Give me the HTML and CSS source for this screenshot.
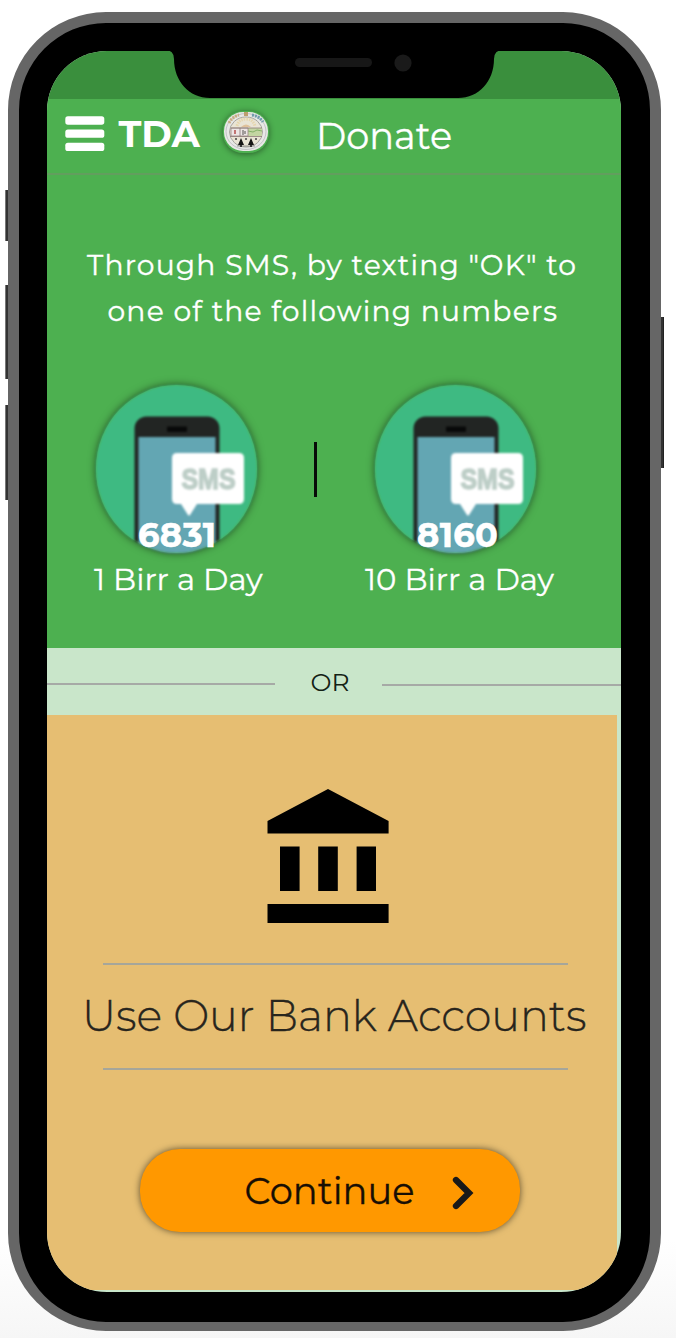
FILE: index.html
```html
<!DOCTYPE html>
<html lang="en">
<head>
<meta charset="utf-8">
<title>TDA Donate</title>
<link rel="stylesheet" href="styles.css">
</head>
<body>
<div class="stage">
<div class="phone">
  <span class="side-button silent"></span>
  <span class="side-button volume-up"></span>
  <span class="side-button volume-down"></span>
  <span class="side-button power"></span>
  <svg class="notch" width="338" height="50" viewBox="0 0 338 50">
    <path d="M0 -2V0Q9 0 9 9C9 31 24 48 45 48H293C314 48 329 31 329 9Q329 0 338 0V-2Z" fill="#000"/>
    <rect x="130" y="8" width="77" height="9" rx="4.5" fill="#171717"/>
    <circle cx="238" cy="13" r="8.6" fill="#1a1a1a"/>
  </svg>
  <div class="screen">
    <div class="status"></div>
    <header class="appbar">
      <svg class="menu" width="40" height="36" viewBox="0 0 40 36" fill="#fff">
        <rect x=".3" y=".3" width="39" height="8.4" rx="2.6"/>
        <rect x=".3" y="13.4" width="39" height="8.4" rx="2.6"/>
        <rect x=".3" y="26.7" width="39" height="8.4" rx="2.6"/>
      </svg>
      <span class="brand">TDA</span>
      <svg class="seal" width="46" height="42" viewBox="0 0 46 42">
        <rect x="1" y="1" width="44" height="39" rx="19" fill="#e8e8e6"/>
        <ellipse cx="23" cy="20.500" rx="20" ry="18" fill="none" stroke="#b9b8be" stroke-width=".8"/>
        <ellipse cx="23" cy="21" rx="16.500" ry="15" fill="#e9e4d5" stroke="#a5a49e" stroke-width="1"/>
        <path d="M6 12Q9 6 16 4" fill="none" stroke="#c9ac81" stroke-width="3" stroke-dasharray="2 1"/>
        <path d="M29 4Q36 5 40 11" fill="none" stroke="#6f9bac" stroke-width="3" stroke-dasharray="2 1"/>
        <path d="M21 1h4v4h-4z" fill="#bd9e6d"/>
        <path d="M14 15Q16 8 23 8T32 15" fill="none" stroke="#e6d6ae" stroke-width="3" stroke-dasharray="1.500 1"/>
        <path d="M18 16Q23 11 28 16" fill="#dfc09a"/>
        <path d="M25 17h14v8H25z" fill="#c3d5a2"/>
        <path d="M25 20l5 1 4-2 5 1" fill="none" stroke="#84b068"/>
        <path d="M8 17h17v8H8z" fill="#ece5e5" stroke="#9a8584" stroke-width=".8"/>
        <path d="M17 17v8M8 17h31M7 25.500h32" stroke="#8c7976" stroke-width=".8"/>
        <path d="M12 19v4" stroke="#b54d4d" stroke-width="1.500"/>
        <path d="M20 19v5M22 20v3" stroke="#565250"/>
        <circle cx="13" cy="28" r="1" fill="#444"/><circle cx="23" cy="28" r="1" fill="#444"/><circle cx="33" cy="28" r="1" fill="#444"/>
        <path d="M18 27l3 7h-2v2h-2v-2h-2zM28 27l3 7h-2v2h-2v-2h-2z" fill="#171717"/>
        <path d="M14 35h18" stroke="#777" stroke-width=".7"/>
      </svg>
      <h1 class="title">Donate</h1>
    </header>
    <section class="sms">
      <p class="lead"><span class="first-line">Through SMS, by texting "OK" to</span><span class="second-line">one of the following numbers</span></p>
      <div class="plans">
        <div class="plan">
          <div class="badge">
            <svg class="art" width="161" height="168" viewBox="0 0 161 168">
              <defs><clipPath id="disc"><ellipse cx="80.500" cy="84" rx="80.500" ry="84"/></clipPath></defs>
              <g id="sms-art">
                <g clip-path="url(#disc)">
                  <rect width="161" height="168" fill="#3eba82"/>
                  <rect x="38.500" y="31.500" width="85" height="150" rx="12" fill="#222523"/>
                  <rect x="42.500" y="52" width="77" height="120" fill="#63a6b3"/>
                  <rect x="71" y="41.500" width="20" height="5.500" rx="1" fill="#080909"/>
                </g>
                <path d="M81 68h62q5 0 5 5v41q0 5-5 5H101L94 130Q93 131 92 130L85 119h-4q-5 0-5-5V73q0-5 5-5z" fill="#fff"/>
                <text x="85.500" y="103.500" font-family="Liberation Sans, sans-serif" font-weight="700" font-size="30" textLength="54" lengthAdjust="spacingAndGlyphs" fill="#bdcec7" stroke="#bdcec7" stroke-width="1.500">SMS</text>
              </g>
            </svg>
            <span class="number">6831</span>
          </div>
          <span class="rate">1 Birr a Day</span>
        </div>
        <div class="divider"></div>
        <div class="plan second">
          <div class="badge">
            <svg class="art" width="161" height="168" viewBox="0 0 161 168"><use href="#sms-art"/></svg>
            <span class="number">8160</span>
          </div>
          <span class="rate">10 Birr a Day</span>
        </div>
      </div>
    </section>
    <div class="or"><span class="rule left"></span><span class="or-label">OR</span><span class="rule right"></span></div>
    <section class="bank">
      <svg class="bank-icon" width="122" height="134" viewBox="0 0 122 134">
        <path d="M61 0L121.600 32V44.500H.5V32ZM13 57.500H32.600V102H13ZM51.200 57.500H70.800V102H51.200ZM89.600 57.500H109V102H89.600ZM.5 115H121.600V134H.5Z" fill="#000"/>
      </svg>
      <h2 class="bank-title"><span>Use Our Bank Accounts</span></h2>
      <button class="continue">Continue
        <svg class="chevron" width="22" height="34" viewBox="0 0 22 34"><path d="M4 4L17 17L4 30" fill="none" stroke="#191919" stroke-width="6.300" stroke-linecap="round"/></svg>
      </button>
    </section>
  </div>
</div>
</div>
</body>
</html>
```
FILE: styles.css
```css
* { box-sizing: border-box; }
body {
  margin: 0;
  background: linear-gradient(#fff 1240px, #f6f6f6 1338px);
  font-family: Montserrat, Inter, "Open Sans", sans-serif;
  font-weight: 500;
  color: #fff;
}
.stage { height: 1338px; padding: 12px 0 0 8px; }
.phone {
  position: relative;
  width: 652.500px;
  height: 1318.500px;
  padding: 27.500px 28px 28px;
  border: 11px solid #666;
  border-bottom-width: 9.500px;
  border-radius: 98px;
  background: #000;
}
.side-button { position: absolute; left: -14px; width: 3px; background: #333; border-left: 1px solid #777; }
.silent { top: 167px; height: 51px; }
.volume-up { top: 262px; height: 94px; }
.volume-down { top: 382px; height: 95px; }
.power { left: auto; right: -14px; top: 294px; height: 151px; border: 0; border-right: 1px solid #222; }
.notch { position: absolute; z-index: 1; left: 146px; top: 27px; overflow: visible; }
.screen {
  width: 573.500px;
  height: 1241.500px;
  border-radius: 60px;
  overflow: hidden;
  background: #c9e6ca;
}
.status { height: 48px; background: #3a8f3d; }
.appbar {
  display: flex;
  height: 76px;
  padding: 12px 0 0 17.500px;
  border-bottom: 2px solid #629e5e;
  background: #4db050;
}
.menu { flex: none; margin-top: 5px; }
.brand { flex: none; width: 118.500px; padding-left: 14px; font-weight: 700; font-size: 37px; line-height: 45px; }
.seal { flex: none; border-radius: 20px; box-shadow: 0 1px 6px #0007; filter: blur(.3px); }
.title { margin: 2.500px 0 0 47px; font-weight: 400; font-size: 36.700px; line-height: 45px; -webkit-text-stroke: .3px; }
.sms { height: 473px; padding-top: 67px; background: #4db050; }
.lead { display: flex; flex-direction: column; margin: 0; font-weight: 400; font-size: 28.200px; line-height: 46px; letter-spacing: 1.200px; white-space: nowrap; -webkit-text-stroke: .35px; }
.first-line { margin-left: 40px; }
.second-line { margin-left: 60.500px; }
.plans { display: flex; margin-top: 51.500px; }
.plan { width: 180px; margin-left: 40px; white-space: nowrap; }
.badge { position: relative; width: 161px; height: 168px; margin-left: 9px; border-radius: 50%; box-shadow: 0 0 8px #0009; }
.art { display: block; filter: blur(.9px); }
.number { position: absolute; left: 42px; top: 130px; font-size: 33.700px; line-height: 40px; font-weight: 700; letter-spacing: .4px; -webkit-text-stroke: .5px; }
.rate { display: block; margin: 6px 0 0 7px; font-size: 30.700px; line-height: 40px; font-weight: 400; -webkit-text-stroke: .3px; }
.divider { width: 2.500px; height: 55px; margin: 57px 0 0 47px; background: #080b08; }
.second { margin-left: 49.500px; }
.second .rate { margin-left: -1px; }
.or { display: flex; height: 67px; color: #132114; }
.rule { height: 2px; background: #a6aaa6; }
.rule.left { width: 228px; margin-top: 35px; }
.rule.right { width: 238.500px; margin-top: 36.500px; }
.or-label { width: 107px; padding-left: 35.500px; font-weight: 400; font-size: 25px; line-height: 68px; }
.bank { width: 570px; height: 575.500px; padding-top: 74px; background: #e6be72; color: #28251d; }
.bank-icon { display: block; margin-left: 220px; }
.bank-title {
  width: 465px;
  height: 107px;
  margin: 40px 0 0 56px;
  border: solid #a6a69a;
  border-width: 2px 0;
  font-weight: 300;
  font-size: 42.900px;
  line-height: 102px;
  white-space: nowrap;
}
.bank-title span { margin-left: -21px; -webkit-text-stroke: .3px; }
.continue {
  display: flex;
  align-items: center;
  width: 380px;
  height: 83px;
  margin: 79.500px 0 0 92.500px;
  padding: 0 0 0 105px;
  border: 0;
  border-radius: 40px;
  background: #ff9800;
  box-shadow: 0 0 7px #0009;
  color: #170e04;
  font-family: Montserrat, Inter, sans-serif;
  font-weight: 400;
  font-size: 36.800px;
  line-height: 46px;
  -webkit-text-stroke: .3px;
}
.chevron { margin: 5px 0 0 38px; }
```
